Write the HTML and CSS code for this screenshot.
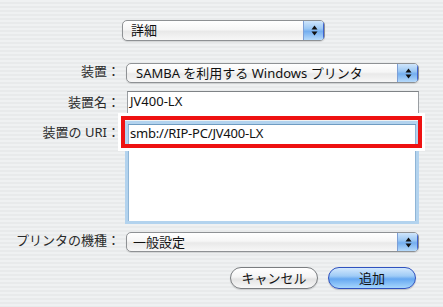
FILE: index.html
```html
<!DOCTYPE html>
<html lang="ja">
<head>
<meta charset="utf-8">
<title>プリンタの追加</title>
<link rel="stylesheet" href="styles.css">
</head>
<body>
<div class="sheet">
  <div class="top-row">
    <div class="popup popup-top">
      <span class="popup-text">詳細</span>
      <span class="popup-arrows"><svg width="7" height="11" viewBox="0 0 7 11"><path d="M3.5 0.5 L6.5 4.5 L0.5 4.5 Z M3.5 10.5 L6.5 6.5 L0.5 6.5 Z" fill="#111"/></svg></span>
    </div>
  </div>

  <div class="form">
    <div class="row row-device">
      <span class="lbl">装置：</span>
      <div class="popup popup-wide">
        <span class="popup-text popup-text-samba">SAMBA を利用する Windows プリンタ</span>
        <span class="popup-arrows"><svg width="7" height="11" viewBox="0 0 7 11"><path d="M3.5 0.5 L6.5 4.5 L0.5 4.5 Z M3.5 10.5 L6.5 6.5 L0.5 6.5 Z" fill="#111"/></svg></span>
      </div>
    </div>

    <div class="row row-name">
      <span class="lbl">装置名：</span>
      <div class="field">JV400-LX</div>
    </div>

    <div class="row row-uri">
      <span class="lbl lbl-top">装置の URI：</span>
      <div class="area-wrap">
        <div class="area">smb://RIP-PC/JV400-LX</div>
        <div class="highlight"></div>
      </div>
    </div>

    <div class="row row-model">
      <span class="lbl">プリンタの機種：</span>
      <div class="popup popup-wide">
        <span class="popup-text popup-text-model">一般設定</span>
        <span class="popup-arrows"><svg width="7" height="11" viewBox="0 0 7 11"><path d="M3.5 0.5 L6.5 4.5 L0.5 4.5 Z M3.5 10.5 L6.5 6.5 L0.5 6.5 Z" fill="#111"/></svg></span>
      </div>
    </div>
  </div>

  <div class="buttons">
    <div class="btn btn-cancel">キャンセル</div>
    <div class="btn btn-add">追加</div>
  </div>
</div>
</body>
</html>
```

FILE: styles.css
```css
* {
  box-sizing: border-box;
}

html, body {
  margin: 0;
  padding: 0;
}

body {
  width: 443px;
  height: 307px;
  overflow: hidden;
  font-family: "Noto Sans", "Noto Sans CJK JP", sans-serif;
  font-size: 13px;
  color: #1a1a1a;
  background: repeating-linear-gradient(to bottom, #eff1f2 0px, #eff1f2 2px, #e8eaeb 2px, #e8eaeb 4px);
}

.sheet {
  display: flex;
  flex-direction: column;
  padding-top: 20px;
}

.top-row {
  display: flex;
  padding-left: 122px;
}

/* popup menus */
.popup {
  display: flex;
  height: 20px;
  border: 1px solid #8e9194;
  border-radius: 5px;
  overflow: hidden;
  background: linear-gradient(to bottom, #ffffff 0%, #f6f6f6 45%, #e9e9e9 55%, #f7f7f7 100%);
  box-shadow: 0 1px 1px rgba(0, 0, 0, 0.12);
}

.popup-top {
  width: 203px;
  height: 21px;
}

.popup-wide {
  width: 293px;
}

.popup-text {
  flex: 1;
  padding-left: 8px;
  line-height: 18px;
  white-space: nowrap;
  color: #111;
}

.popup-top .popup-text {
  line-height: 19px;
}

.popup-text-samba {
  padding-left: 9px;
}

.popup-text-model {
  padding-left: 6px;
}

.popup-arrows {
  width: 21px;
  display: flex;
  align-items: center;
  justify-content: center;
  border-left: 1px solid #7d9fd6;
  background: linear-gradient(to bottom, #cfe5fb 0%, #9cc8f4 40%, #74aeef 55%, #b6dafb 100%);
  box-shadow: inset -1px 0 0 #3f63d0;
}

/* form rows */
.form {
  display: flex;
  flex-direction: column;
  margin-top: 22px;
}

.row {
  display: flex;
  align-items: center;
}

.lbl {
  width: 120px;
  margin-right: 6px;
  flex: none;
  text-align: right;
  white-space: nowrap;
  color: #2a2a2a;
  line-height: 16px;
  position: relative;
  top: -2px;
}

.row-name {
  margin-top: 8px;
}

.row-name .lbl {
  top: -1px;
}

.field {
  width: 292px;
  height: 23px;
  margin-left: 1px;
  background: #fff;
  border: 1px solid #9a9ea2;
  border-top-color: #7f8386;
  padding: 1px 0 0 2px;
  line-height: 16px;
  color: #111;
}

.row-uri {
  margin-top: 7px;
  align-items: flex-start;
}

.lbl-top {
  top: 3px;
}

.area-wrap {
  position: relative;
  margin-left: -1px;
}

.area {
  width: 294px;
  height: 103px;
  background: #fff;
  border: 3px solid #b3d3ee;
  box-shadow: inset 0 1px 0 #6f9cc2, inset 1px 0 0 #8fb5d6, inset -1px 0 0 #8fb5d6;
  padding: 1px 0 0 2px;
  line-height: 16px;
  color: #111;
  letter-spacing: -0.2px;
}

.highlight {
  position: absolute;
  left: -4px;
  top: -5px;
  width: 301px;
  height: 32px;
  border: 4px solid #ee1111;
  box-shadow: 0 0 0 3px #ffffff;
}

.row-model {
  margin-top: 8px;
}

/* buttons */
.buttons {
  display: flex;
  gap: 10px;
  margin-top: 15px;
  padding-left: 230px;
}

.btn {
  width: 88px;
  height: 22px;
  border-radius: 11px;
  display: flex;
  align-items: center;
  justify-content: center;
  line-height: 16px;
  color: #111;
}

.btn-cancel {
  border: 1px solid #7a7d80;
  background: linear-gradient(to bottom, #ffffff 0%, #f4f4f4 45%, #e3e3e3 55%, #f8f8f8 100%);
  box-shadow: 0 1px 1px rgba(0, 0, 0, 0.15);
}

.btn-add {
  border: 1px solid #2f52bf;
  background: linear-gradient(to bottom, #d3e8fd 0%, #9fcbf6 40%, #66a8f1 55%, #a6d6fd 100%);
  box-shadow: 0 1px 1px rgba(0, 0, 0, 0.2);
}
```
